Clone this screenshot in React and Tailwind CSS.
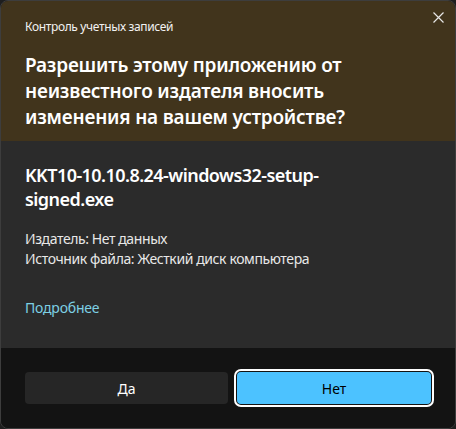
import React from 'react';

function CloseIcon() {
    return (
        <svg width="11" height="11" viewBox="0 0 11 11" className="block">
            <path d="M0.5 0.5 L10.5 10.5 M10.5 0.5 L0.5 10.5" stroke="#e6e6e6" strokeWidth="1.2" fill="none" />
        </svg>
    );
}

export default function App() {
    return (
        <div className="w-[456px] h-[429px] bg-[#1e1e1e]" style={{ fontFamily: '"Noto Sans", "Open Sans", sans-serif' }}>
            <div className="relative flex flex-col w-full h-full border border-[#3d3d3d] rounded-[8px] overflow-hidden">
                {/* header */}
                <div className="h-[140px] shrink-0 bg-[#41341c] px-[24px] pt-[18px]">
                    <div className="text-[12px] leading-[16px] text-[#f2f2f2] tracking-[-0.35px]">Контроль учетных записей</div>
                    <div className="mt-[17px] text-[19px] leading-[26px] font-semibold text-white tracking-[-0.2px]">
                        Разрешить этому приложению от<br />
                        неизвестного издателя вносить<br />
                        изменения на вашем устройстве?
                    </div>
                </div>
                <button className="absolute right-[11px] top-[11px] p-[0px]">
                    <CloseIcon />
                </button>

                {/* body */}
                <div className="h-[207px] shrink-0 bg-[#2b2b2b] px-[24px] pt-[22px]">
                    <div className="text-[18px] leading-[24px] font-semibold text-white tracking-[-0.55px]">
                        KKT10-10.10.8.24-windows32-setup-<br />
                        signed.exe
                    </div>
                    <div className="mt-[18px] text-[14px] leading-[20px] text-[#e8e8e8] tracking-[-0.4px]">
                        <div>Издатель: Нет данных</div>
                        <div>Источник файла: Жесткий диск компьютера</div>
                    </div>
                    <div className="mt-[29px] text-[14px] leading-[20px] text-[#7dd0e4] tracking-[-0.2px]">Подробнее</div>
                </div>

                {/* footer */}
                <div className="flex-1 bg-[#131313] flex items-start pt-[24px] pl-[24px] gap-[6px]">
                    <button className="w-[203px] h-[32px] rounded-[4px] bg-[#262626] text-[14px] text-white">
                        Да
                    </button>
                    <div className="-mt-[3px] rounded-[7px] border-2 border-white p-[1px] bg-[#131313]">
                        <button className="block w-[194px] h-[32px] rounded-[4px] bg-[#4cc2ff] text-[14px] text-black">
                            Нет
                        </button>
                    </div>
                </div>
            </div>
        </div>
    );
}
